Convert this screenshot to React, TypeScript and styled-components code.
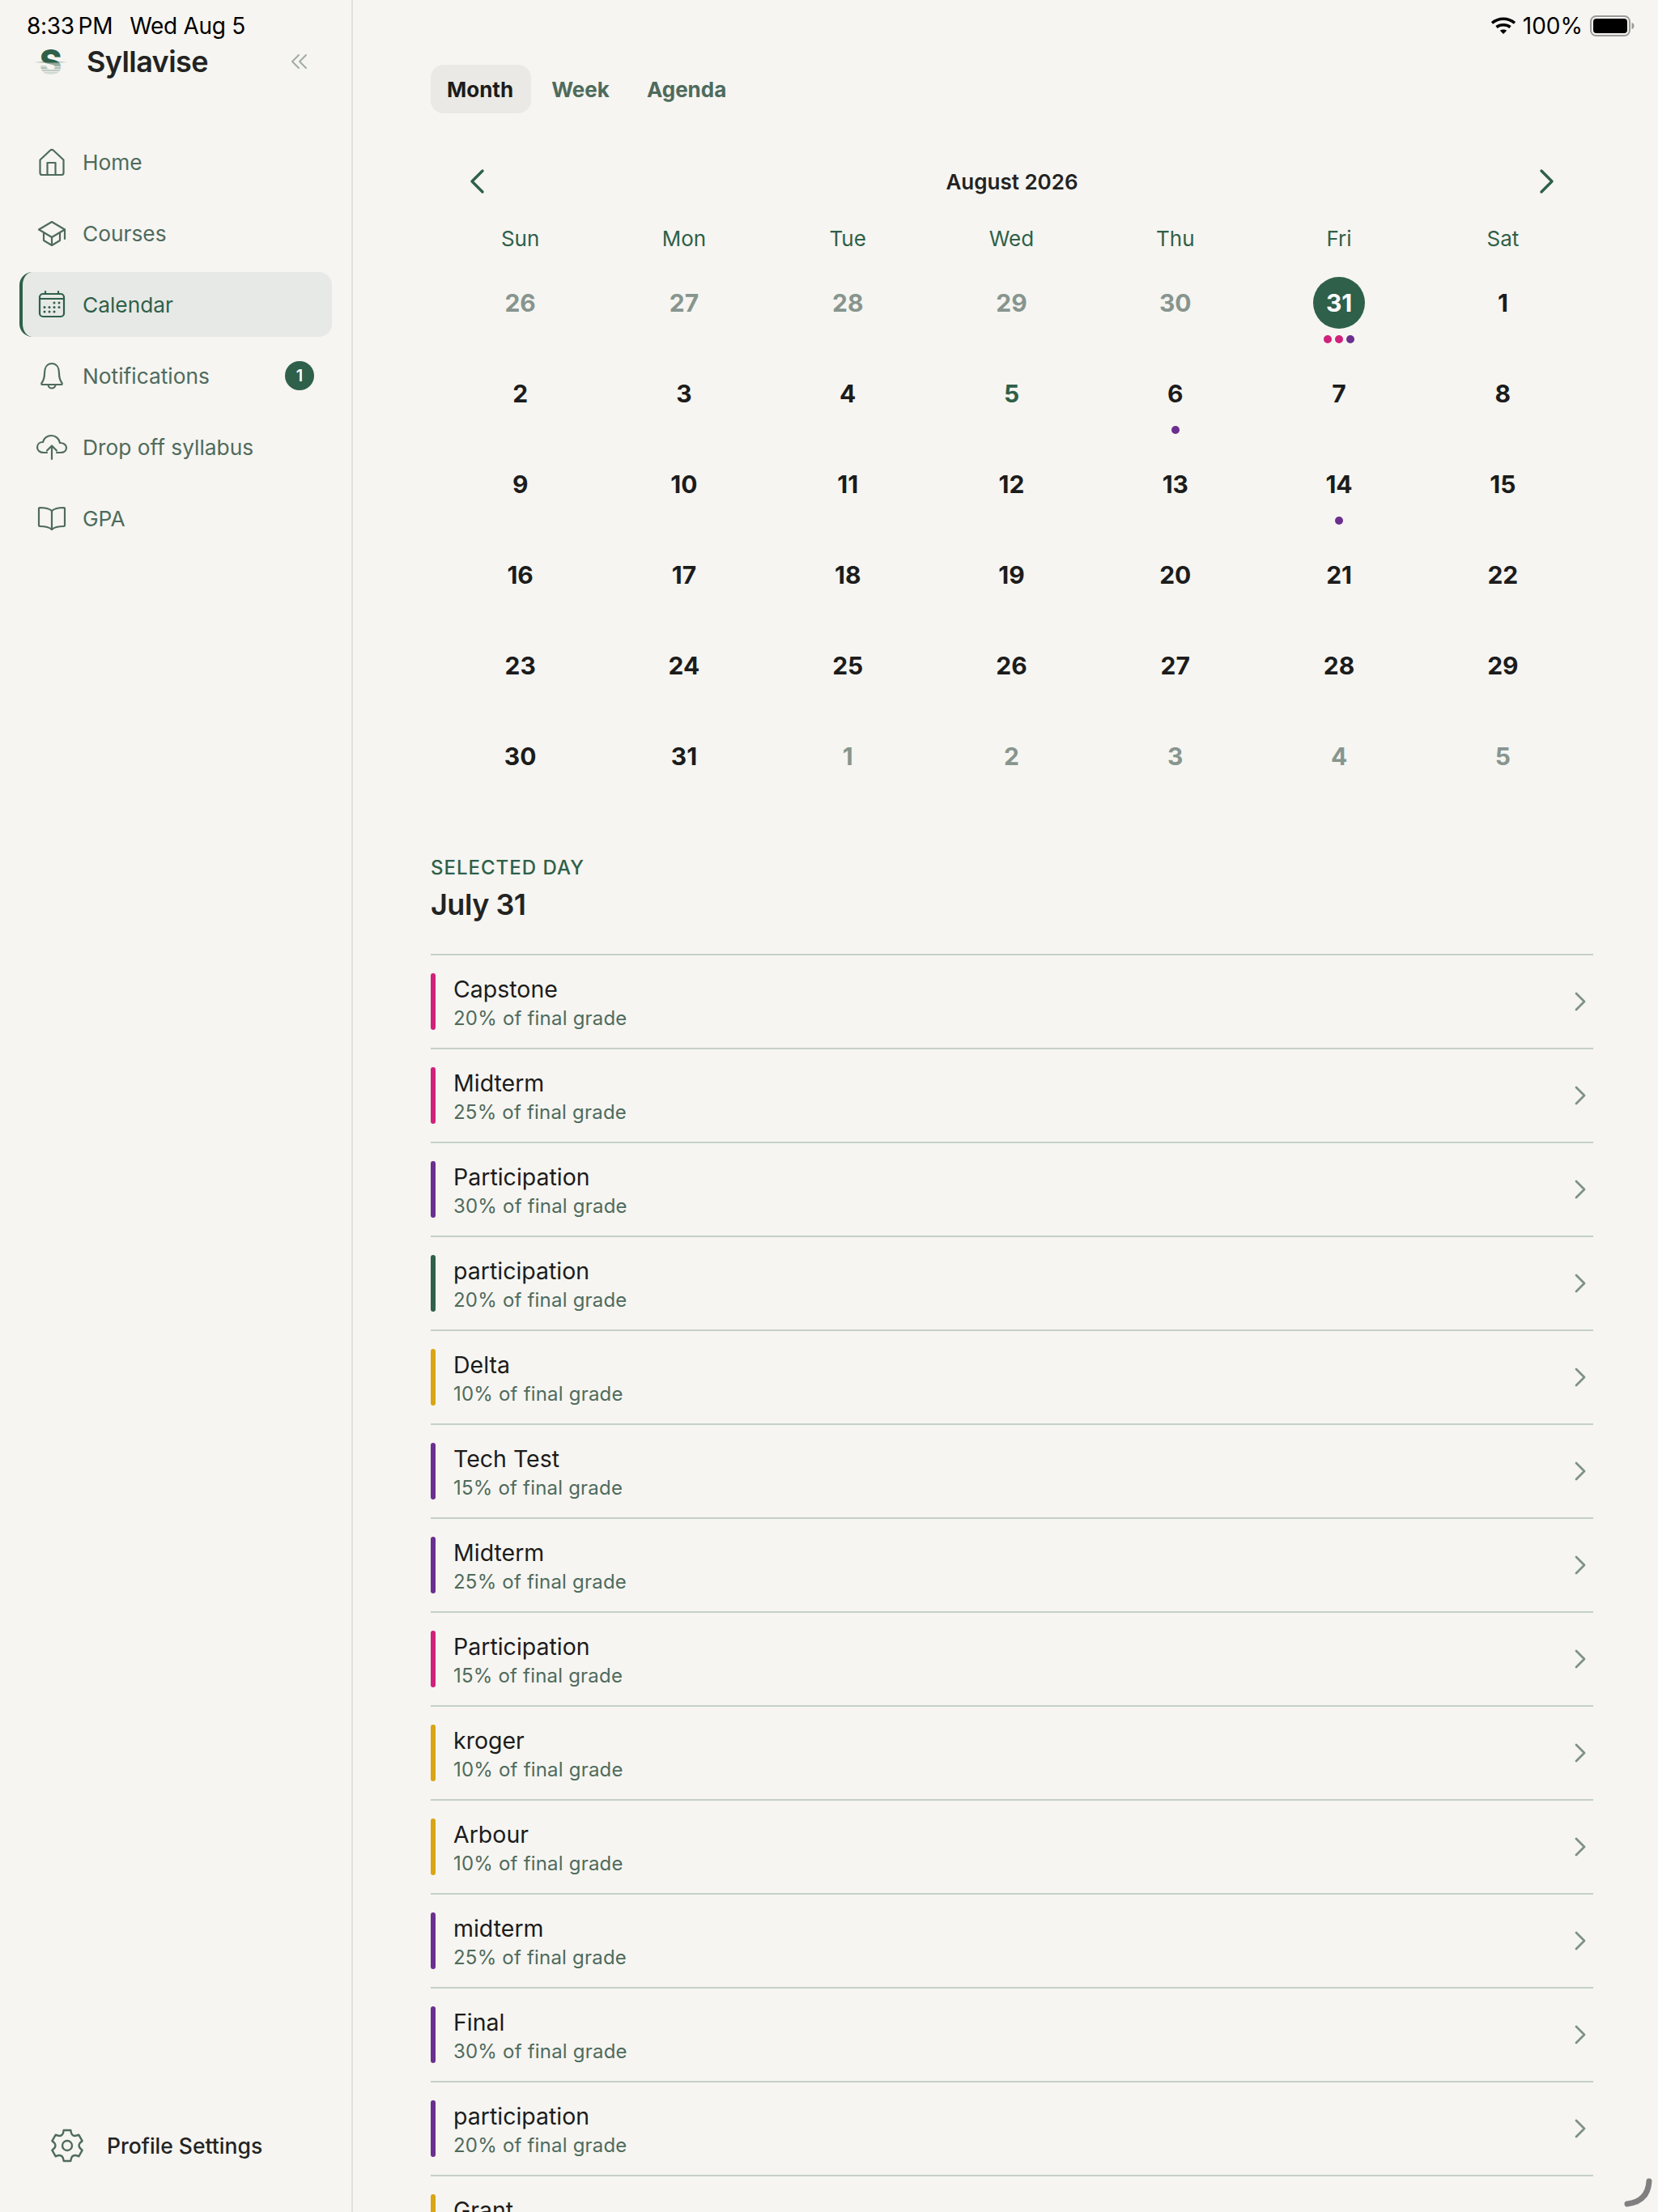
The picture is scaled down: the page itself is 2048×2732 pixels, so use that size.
import React from "react";
import styled, { createGlobalStyle } from "styled-components";

const BG = "#f6f5f1";

const Global = createGlobalStyle`
  html, body { margin: 0; padding: 0; background: ${BG}; }
  body { width: 2048px; height: 2732px; overflow: hidden; font-family: Inter, "Liberation Sans", sans-serif; }
  * { box-sizing: border-box; }
`;

const Page = styled.div`
  position: relative;
  display: flex;
  width: 2048px;
  height: 2732px;
  overflow: hidden;
  background: ${BG};
`;

/* status bar */
const StatusBar = styled.div`
  position: absolute;
  top: 12px;
  left: 33px;
  right: 28px;
  height: 40px;
  display: flex;
  align-items: center;
  justify-content: space-between;
  color: #000;
  font-family: Inter, sans-serif;
  font-size: 28px;
  line-height: 40px;
`;
const StatusLeft = styled.div`
  display: flex;
  gap: 21px;
  letter-spacing: -0.3px;
`;
const StatusRight = styled.div`
  display: flex;
  align-items: center;
  gap: 9px;
`;

/* sidebar */
const Sidebar = styled.aside`
  width: 436px;
  flex: none;
  height: 100%;
  border-right: 2px solid #dfe2dd;
  display: flex;
  flex-direction: column;
  padding-bottom: 56px;
`;
const Brand = styled.div`
  height: 52px;
  margin-top: 50px;
  display: flex;
  align-items: center;
  padding: 0 52px 0 40px;
`;
const BrandName = styled.div`
  margin-left: 23px;
  font-size: 36px;
  font-weight: 600;
  color: #232323;
  letter-spacing: -0.6px;
  flex: 1;
`;
const Nav = styled.nav`
  margin-top: 58px;
  padding: 0 24px;
  display: flex;
  flex-direction: column;
  gap: 8px;
`;
const NavItem = styled.div<{ $active?: boolean }>`
  height: 80px;
  display: flex;
  align-items: center;
  padding: 0 22px 0 ${(p) => (p.$active ? "16px" : "20px")};
  border-radius: 16px;
  background: ${(p) => (p.$active ? "#e7e9e6" : "transparent")};
  border-left: ${(p) => (p.$active ? "4px solid #2f6049" : "none")};
  color: ${(p) => (p.$active ? "#2f6049" : "#4f6b5d")};
  font-size: 26.3px;
  font-weight: 400;
`;
const NavIcon = styled.svg`
  width: 40px;
  height: 40px;
  flex: none;
  fill: none;
  stroke: currentColor;
  stroke-width: 2.2;
  stroke-linecap: round;
  stroke-linejoin: round;
`;
const NavLabel = styled.span`
  margin-left: 18px;
  flex: 1;
`;
const Badge = styled.span`
  width: 36px;
  height: 36px;
  border-radius: 50%;
  background: #2f6049;
  color: #fff;
  font-size: 20px;
  font-weight: 600;
  display: flex;
  align-items: center;
  justify-content: center;
`;
const Profile = styled.div`
  margin-top: auto;
  display: flex;
  align-items: center;
  height: 52px;
  padding-left: 62px;
  gap: 28px;
  color: #4f6b5d;
  font-size: 26.5px;
  font-weight: 500;
`;
const ProfileLabel = styled.span`
  color: #232323;
`;
const GearIcon = styled.svg`
  width: 42px;
  height: 42px;
  flex: none;
  fill: none;
  stroke: currentColor;
  stroke-width: 2.4;
  stroke-linejoin: round;
`;

/* main */
const Main = styled.main`
  flex: 1;
  min-width: 0;
  padding: 80px 80px 0 96px;
`;
const Tabs = styled.div`
  display: flex;
  height: 60px;
  gap: 4px;
`;
const Tab = styled.div<{ $active?: boolean }>`
  height: 60px;
  display: flex;
  align-items: center;
  padding: ${(p) => (p.$active ? "0 22px 0 20px" : "0 21px")};
  border-radius: 16px;
  font-size: 26px;
  font-weight: 680;
  background: ${(p) => (p.$active ? "#eae9e5" : "transparent")};
  color: ${(p) => (p.$active ? "#1c1c1c" : "#4f6b5d")};
`;
const MonthHeader = styled.div`
  margin-top: 54px;
  height: 60px;
  display: flex;
  align-items: center;
  justify-content: space-between;
  padding: 0 38px 0 38px;
  color: #2f6049;
`;
const MonthTitle = styled.div`
  font-size: 26px;
  font-weight: 600;
  color: #232323;
`;
const Chevron = styled.svg`
  display: block;
  fill: none;
  stroke: currentColor;
  stroke-linecap: round;
  stroke-linejoin: round;
`;
const NavChevron = styled(Chevron)`
  width: 40px;
  height: 40px;
  stroke-width: 3.4;
`;
const CalendarGrid = styled.div`
  margin-top: 20px;
  display: grid;
  grid-template-columns: repeat(7, 1fr);
  padding: 0 10.5px 0 9.5px;
`;
const Weekday = styled.div`
  height: 40px;
  margin-bottom: 4px;
  display: flex;
  align-items: center;
  justify-content: center;
  font-size: 26px;
  color: #2f6049;
`;
const DayCell = styled.div`
  height: 112px;
  display: flex;
  flex-direction: column;
  align-items: center;
  padding-top: 24px;
`;
const DayNum = styled.div<{ $muted?: boolean; $selected?: boolean; $today?: boolean }>`
  width: 64px;
  height: 64px;
  border-radius: 50%;
  display: flex;
  align-items: center;
  justify-content: center;
  font-size: 30px;
  font-weight: 650;
  background: ${(p) => (p.$selected ? "#2f6049" : "transparent")};
  color: ${(p) =>
    p.$selected ? "#fff" : p.$muted ? "#87958e" : p.$today ? "#2f6049" : "#1c1c1c"};
`;
const Dots = styled.div`
  display: flex;
  gap: 4px;
  margin-top: 8px;
  height: 10px;
`;
const Dot = styled.span<{ $color: string }>`
  width: 10px;
  height: 10px;
  border-radius: 50%;
  background: ${(p) => p.$color};
`;
const SectionLabel = styled.div`
  margin-top: 66px;
  font-size: 24px;
  font-weight: 450;
  line-height: 32px;
  letter-spacing: 1px;
  color: #2f6049;
`;
const SectionTitle = styled.div`
  margin-top: 6px;
  font-size: 36px;
  line-height: 46px;
  font-weight: 600;
  letter-spacing: -0.5px;
  color: #232323;
`;
const List = styled.div`
  margin-top: 38px;
  border-top: 2px solid #c5d0c6;
`;
const Row = styled.div`
  height: 116px;
  border-bottom: 2px solid #c5d0c6;
  display: flex;
  align-items: center;
  padding-right: 4px;
`;
const Bar = styled.span<{ $color: string }>`
  width: 6px;
  height: 70px;
  border-radius: 3px;
  flex: none;
  background: ${(p) => p.$color};
`;
const RowText = styled.div`
  margin-left: 22px;
  padding-top: 3px;
  flex: 1;
`;
const RowTitle = styled.div`
  font-size: 28.5px;
  line-height: 38px;
  color: #1c1c1c;
`;
const RowSub = styled.div`
  font-size: 24px;
  line-height: 34px;
  letter-spacing: 0.2px;
  color: #4f6b5d;
`;
const RowChevron = styled(Chevron)`
  width: 24px;
  height: 32px;
  stroke-width: 2.8;
  color: #7e9187;
`;
const ScrollArc = styled.svg`
  position: absolute;
  right: 6px;
  bottom: 6px;
  width: 36px;
  height: 36px;
  fill: none;
  stroke: #808080;
  stroke-width: 7;
  stroke-linecap: round;
`;

const PINK = "#d0217c";
const PURPLE = "#6b2f8f";
const GREEN = "#2f6049";
const GOLD = "#d9a514";

const weekdays = ["Sun", "Mon", "Tue", "Wed", "Thu", "Fri", "Sat"];

type Day = { n: number; muted?: boolean; selected?: boolean; today?: boolean; dots?: string[] };
const days: Day[] = [
  ...[26, 27, 28, 29, 30].map((n) => ({ n, muted: true })),
  { n: 31, selected: true, dots: [PINK, PINK, PURPLE] },
  { n: 1 },
  { n: 2 },
  { n: 3 },
  { n: 4 },
  { n: 5, today: true },
  { n: 6, dots: [PURPLE] },
  { n: 7 },
  { n: 8 },
  ...[9, 10, 11, 12, 13].map((n) => ({ n })),
  { n: 14, dots: [PURPLE] },
  { n: 15 },
  ...Array.from({ length: 16 }, (_, i) => ({ n: 16 + i })),
  ...[1, 2, 3, 4, 5].map((n) => ({ n, muted: true })),
];

const rows: [string, string, string][] = [
  ["Capstone", "20% of final grade", PINK],
  ["Midterm", "25% of final grade", PINK],
  ["Participation", "30% of final grade", PURPLE],
  ["participation", "20% of final grade", GREEN],
  ["Delta", "10% of final grade", GOLD],
  ["Tech Test", "15% of final grade", PURPLE],
  ["Midterm", "25% of final grade", PURPLE],
  ["Participation", "15% of final grade", PINK],
  ["kroger", "10% of final grade", GOLD],
  ["Arbour", "10% of final grade", GOLD],
  ["midterm", "25% of final grade", PURPLE],
  ["Final", "30% of final grade", PURPLE],
  ["participation", "20% of final grade", PURPLE],
  ["Grant", "10% of final grade", GOLD],
];

const polar = (r: number, deg: number) => {
  const a = (deg * Math.PI) / 180;
  return `${(21 + r * Math.cos(a)).toFixed(2)} ${(21 + r * Math.sin(a)).toFixed(2)}`;
};
const gearPath = (() => {
  let d = "";
  for (let k = 0; k < 6; k++) {
    const a = -90 + 60 * k;
    d += `${k === 0 ? "M" : "L"}${polar(19.5, a - 13)} L${polar(19.5, a + 13)} `;
    d += `Q${polar(10.5, a + 30)} ${polar(19.5, a + 47)} `;
  }
  return d + "Z";
})();

const HomeIcon = () => (
  <NavIcon viewBox="0 0 40 40">
    <path d="M5.5 17.5 L18 5.8 Q20 4 22 5.8 L34.5 17.5 V33.5 Q34.5 36 32 36 H8 Q5.5 36 5.5 33.5 Z" />
    <path d="M14.5 36 V21 H24.5 V36" />
  </NavIcon>
);
const CapIcon = () => (
  <NavIcon viewBox="0 0 40 40">
    <path d="M20 6 L36 15.5 L20 25 L4 15.5 Z" />
    <path d="M10 19.5 V29 L20 35 L30 29 V19.5" />
    <path d="M20 25 V35" />
    <path d="M36 15.5 V27" />
  </NavIcon>
);
const CalendarIcon = () => (
  <NavIcon viewBox="0 0 40 40">
    <rect x="5" y="7" width="30" height="28" rx="4" />
    <path d="M12 4 V7 M28 4 V7 M5 13 H35" />
    <g fill="currentColor" stroke="none">
      {[
        [23, 18], [29, 18],
        [11, 23.5], [17, 23.5], [23, 23.5], [29, 23.5],
        [11, 29], [17, 29], [23, 29],
      ].map(([x, y]) => (
        <circle key={`${x}-${y}`} cx={x} cy={y} r="1.5" />
      ))}
    </g>
  </NavIcon>
);
const BellIcon = () => (
  <NavIcon viewBox="0 0 40 40">
    <path d="M20 5 C13.5 5 11 11 11 17 C11 24 9 27 7.5 29 Q6.5 31 9 31 H31 Q33.5 31 32.5 29 C31 27 29 24 29 17 C29 11 26.5 5 20 5 Z" />
    <path d="M15.5 31 A4.5 4.5 0 0 0 24.5 31" />
  </NavIcon>
);
const CloudIcon = () => (
  <NavIcon viewBox="0 0 40 40">
    <path d="M14 27 H10 C5 27 2 24 2 20.5 C2 16.5 5 14 9 14 C10 9 14.5 6 19.5 6 C25 6 29 10 30 15 C34.5 15 38 17.5 38 21 C38 24.5 35 27 31 27 H26" />
    <path d="M20 35 V19 M14 24.5 L20 18.5 L26 24.5" />
  </NavIcon>
);
const BookIcon = () => (
  <NavIcon viewBox="0 0 40 40">
    <path d="M20 11 C17 8 13 7 5 7 Q4 7 4 8 V29 Q4 30 5 30 C13 30 17 31 20 34 C23 31 27 30 35 30 Q36 30 36 29 V8 Q36 7 35 7 C27 7 23 8 20 11 Z" />
    <path d="M20 11 V34" />
  </NavIcon>
);
const Gear = () => (
  <GearIcon viewBox="0 0 42 42">
    <path d={gearPath} />
    <circle cx="21" cy="21" r="6" />
  </GearIcon>
);

const LogoSvg = styled.svg`
  width: 44px;
  height: 44px;
  flex: none;
`;
const Logo = () => (
  <LogoSvg viewBox="0 0 44 44">
    <defs>
      <linearGradient id="sfade" gradientUnits="userSpaceOnUse" x1="0" y1="6" x2="0" y2="38">
        <stop offset="0" stopColor="#2f6049" />
        <stop offset="0.52" stopColor="#2f6049" />
        <stop offset="0.55" stopColor="#2f6049" stopOpacity="0.55" />
        <stop offset="1" stopColor="#2f6049" stopOpacity="0.12" />
      </linearGradient>
      <linearGradient id="sline" x1="0" y1="0" x2="1" y2="0">
        <stop offset="0" stopColor="#2f6049" stopOpacity="0" />
        <stop offset="0.5" stopColor="#2f6049" stopOpacity="0.75" />
        <stop offset="1" stopColor="#2f6049" stopOpacity="0" />
      </linearGradient>
    </defs>
    <text x="22.5" y="38" textAnchor="middle" fontFamily="Inter, sans-serif" fontWeight="800" fontSize="42" fill="url(#sfade)">
      S
    </text>
    <rect x="2" y="22" width="41" height="1.5" fill="url(#sline)" />
    <rect x="8" y="28" width="28" height="1" fill={BG} opacity="0.7" />
    <rect x="8" y="31" width="28" height="1" fill={BG} opacity="0.7" />
    <rect x="8" y="34" width="28" height="1" fill={BG} opacity="0.7" />
  </LogoSvg>
);

const CollapseIcon = styled(Chevron)`
  width: 24px;
  height: 24px;
  stroke: #a0aca5;
  stroke-width: 2;
`;

export default function App() {
  return (
    <Page>
      <Global />
      <Sidebar>
        <Brand>
          <Logo />
          <BrandName>Syllavise</BrandName>
          <CollapseIcon viewBox="0 0 24 24">
            <path d="M11 4 L3 12 L11 20 M20 4 L12 12 L20 20" />
          </CollapseIcon>
        </Brand>
        <Nav>
          <NavItem><HomeIcon /><NavLabel>Home</NavLabel></NavItem>
          <NavItem><CapIcon /><NavLabel>Courses</NavLabel></NavItem>
          <NavItem $active><CalendarIcon /><NavLabel>Calendar</NavLabel></NavItem>
          <NavItem><BellIcon /><NavLabel>Notifications</NavLabel><Badge>1</Badge></NavItem>
          <NavItem><CloudIcon /><NavLabel>Drop off syllabus</NavLabel></NavItem>
          <NavItem><BookIcon /><NavLabel>GPA</NavLabel></NavItem>
        </Nav>
        <Profile>
          <Gear />
          <ProfileLabel>Profile Settings</ProfileLabel>
        </Profile>
      </Sidebar>
      <Main>
        <Tabs>
          <Tab $active>Month</Tab>
          <Tab>Week</Tab>
          <Tab>Agenda</Tab>
        </Tabs>
        <MonthHeader>
          <NavChevron viewBox="0 0 40 40">
            <path d="M26 7 L13 20 L26 33" />
          </NavChevron>
          <MonthTitle>August 2026</MonthTitle>
          <NavChevron viewBox="0 0 40 40">
            <path d="M14 7 L27 20 L14 33" />
          </NavChevron>
        </MonthHeader>
        <CalendarGrid>
          {weekdays.map((d) => (
            <Weekday key={d}>{d}</Weekday>
          ))}
          {days.map((d, i) => (
            <DayCell key={i}>
              <DayNum $muted={d.muted} $selected={d.selected} $today={d.today}>{d.n}</DayNum>
              {d.dots && (
                <Dots>
                  {d.dots.map((c, j) => (
                    <Dot key={j} $color={c} />
                  ))}
                </Dots>
              )}
            </DayCell>
          ))}
        </CalendarGrid>
        <SectionLabel>SELECTED DAY</SectionLabel>
        <SectionTitle>July 31</SectionTitle>
        <List>
          {rows.map(([title, sub, color], i) => (
            <Row key={i}>
              <Bar $color={color} />
              <RowText>
                <RowTitle>{title}</RowTitle>
                <RowSub>{sub}</RowSub>
              </RowText>
              <RowChevron viewBox="0 0 24 32">
                <path d="M7 6 L17 16 L7 26" />
              </RowChevron>
            </Row>
          ))}
        </List>
      </Main>
      <StatusBar>
        <StatusLeft>
          <span>8:33{"\u2009"}PM</span>
          <span>Wed Aug 5</span>
        </StatusLeft>
        <StatusRight>
          <svg width="30" height="22" viewBox="0 0 30 22" fill="none" stroke="#000" strokeWidth="3.6">
            <path d="M1 7.5 C9 0.5 21 0.5 29 7.5" />
            <path d="M6.5 12.5 C11 8.8 19 8.8 23.5 12.5" />
            <path d="M15 21 L10.8 16.8 C13 15 17 15 19.2 16.8 Z" fill="#000" stroke="none" />
          </svg>
          <span>100%</span>
          <svg width="56" height="26" viewBox="0 0 56 26">
            <rect x="1" y="1" width="48" height="24" rx="6.5" fill="none" stroke="#9a9a9a" strokeWidth="2" />
            <rect x="4" y="4" width="42" height="18" rx="4" fill="#000" />
            <path d="M51.5 9 C53.5 9.5 54.5 11 54.5 13 C54.5 15 53.5 16.5 51.5 17 Z" fill="#9a9a9a" />
          </svg>
        </StatusRight>
      </StatusBar>
      <ScrollArc viewBox="0 0 36 36">
        <path d="M31 4 C30 20 22 30 4 32" />
      </ScrollArc>
    </Page>
  );
}
